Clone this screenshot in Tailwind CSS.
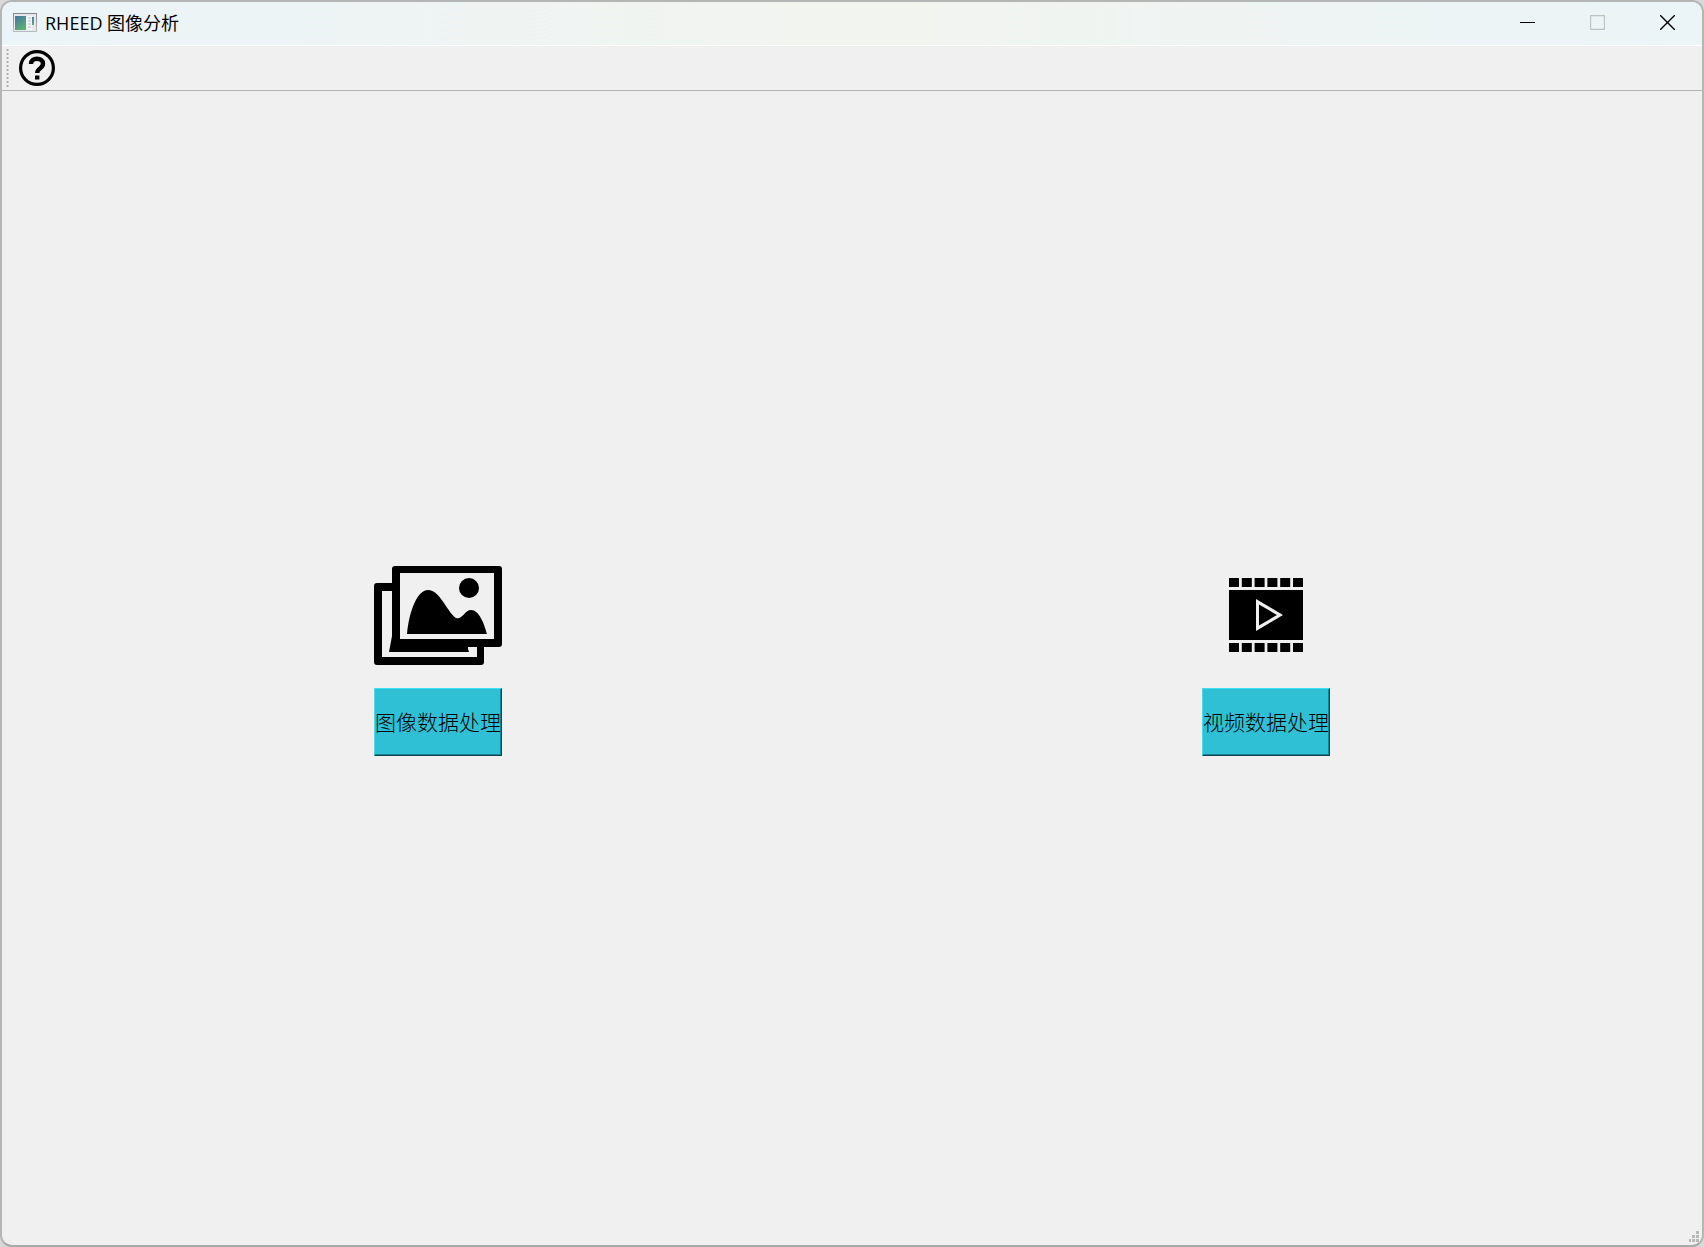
<!DOCTYPE html>
<html lang="zh-CN">
<head>
<meta charset="utf-8">
<title>RHEED 图像分析</title>
<script src="https://cdn.jsdelivr.net/npm/@tailwindcss/browser@4"></script>
</head>
<body class="h-screen overflow-hidden bg-[#d9d9d9]">
<div class="flex h-full flex-col overflow-hidden rounded-xl border-2 border-[#b4b5b5] border-b-[#a9a9a9] bg-[#f0f0f0]">
  <header class="flex h-11 shrink-0 items-center border-b border-white bg-linear-to-r from-[#ebf4f8] via-[#f2f4ef] to-[#ebf4f7] pb-[2px] pl-[11px]">
    <svg class="h-[19px] w-6" viewBox="0 0 24 19" aria-hidden="true">
      <defs>
        <linearGradient id="pane" x1="0" y1="0" x2=".6" y2="1"><stop offset="0" stop-color="#3f78a4"/><stop offset="1" stop-color="#5fb070"/></linearGradient>
        <linearGradient id="frame" x1="0" y1="0" x2="0" y2="1"><stop offset="0" stop-color="#85888d"/><stop offset="1" stop-color="#b9bdc3"/></linearGradient>
      </defs>
      <rect x=".5" y=".5" width="23" height="18" fill="#e6e8ec" stroke="url(#frame)"/>
      <path d="M2 3h12v14H2z" fill="url(#pane)"/>
      <path d="M13 3h6v14h-6z" fill="#f5f6f7"/>
      <path d="M15 5h3M15 8h3M15 11h3M15 14h3" stroke="#bcc0c6"/>
      <path d="M19 4h2v8h-2z" fill="url(#pane)"/>
    </svg>
    <h1 class="ml-2 flex-1 font-['Open_Sans','Noto_Sans_CJK_SC',sans-serif] text-lg font-normal text-black">RHEED 图像分析</h1>
    <div class="flex h-full">
      <button class="flex w-[69px] items-center justify-center" aria-label="最小化"><svg class="size-[15px]" viewBox="0 0 15 15"><path d="M0 7.500h15" stroke="#000"/></svg></button>
      <button class="flex w-[70px] items-center justify-center" aria-label="最大化" disabled><svg class="size-[15px]" viewBox="0 0 15 15"><rect x=".5" y=".5" width="14" height="14" rx="1" fill="none" stroke="#bcc1c3" stroke-width="1.300"/></svg></button>
      <button class="flex w-[70px] items-center justify-center" aria-label="关闭"><svg class="size-[15px]" viewBox="0 0 15 15"><path d="M0 0l15 15M15 0L0 15" stroke="#000" stroke-width="1.400"/></svg></button>
    </div>
  </header>
  <div class="flex h-[45px] shrink-0 items-center border-b border-[#b4b4b4] pl-1" role="toolbar">
    <svg class="h-[38px] w-[3px]" viewBox="0 0 3 38" aria-hidden="true"><path d="M1.500 0v38" stroke="#b0b0b0" stroke-width="2" stroke-dasharray="2 2"/></svg>
    <button class="ml-2 p-[2px]" aria-label="帮助">
      <svg class="size-9" viewBox="0 0 36 36">
        <circle cx="18" cy="18" r="16.400" fill="none" stroke="#000" stroke-width="3.200"/>
        <path d="M12 14c0-3.600 2.600-5.200 6-5.200s6 1.800 6 5c0 4.600-5.800 4.600-5.800 9.200" fill="none" stroke="#000" stroke-width="4.400"/>
        <path d="M16 25.500h4.400v4H16z"/>
      </svg>
    </button>
  </div>
  <main class="flex flex-1 items-center justify-between px-[21.88%]">
    <section class="flex w-32 flex-col items-center gap-2">
      <svg class="size-32" viewBox="0 0 128 128" aria-hidden="true">
        <path fill-rule="evenodd" d="M18 17q0-3 3-3h104q3 0 3 3v75q0 3-3 3h-15v15q0 3-3 3H3q-3 0-3-3V34q0-3 3-3h15zM26 21v66h94V21zM8 39v66h95V95h-9v2l1 3H15l3-16V39z"/>
        <circle cx="95" cy="36" r="10"/>
        <path d="M33 82C35 60 43 38 54 38c12 0 19 22 28 28 6 2 9-8 15-8 8 0 13 13 16 24z"/>
      </svg>
      <button class="flex h-[68px] w-full items-center justify-center border border-t-[#3ce0f4] border-r-[#0d4650] border-b-[#0d4650] border-l-[#3ce0f4] bg-[#30c0d5] font-['Noto_Sans_CJK_SC',sans-serif] text-[21px] font-light whitespace-nowrap text-black shadow-[inset_-1px_-1px_0_#20808e]">图像数据处理</button>
    </section>
    <section class="flex w-32 flex-col items-center gap-2">
      <svg class="size-32" viewBox="0 0 128 128" aria-hidden="true">
        <path d="M27 38h74v50H27z"/>
        <path d="M27 30.500h74M27 95.500h74" stroke="#000" stroke-width="9" stroke-dasharray="10 2.800"/>
        <path fill-rule="evenodd" d="M54 47l27 16-27 16zM57 52.500v21L75 63z" fill="#f0f0f0"/>
      </svg>
      <button class="flex h-[68px] w-full items-center justify-center border border-t-[#3ce0f4] border-r-[#0d4650] border-b-[#0d4650] border-l-[#3ce0f4] bg-[#30c0d5] font-['Noto_Sans_CJK_SC',sans-serif] text-[21px] font-light whitespace-nowrap text-black shadow-[inset_-1px_-1px_0_#20808e]">视频数据处理</button>
    </section>
  </main>
  <footer class="flex h-7 shrink-0 items-end justify-end pr-[3px] pb-[2px]">
    <svg class="size-3" viewBox="0 0 12 12" aria-hidden="true"><path d="M9 0h3v3H9zM5 4h3v3H5zM9 4h3v3H9zM2 8h2v3H2zM5 8h3v3H5zM9 8h3v3H9z" fill="#b8b8b8"/></svg>
  </footer>
</div>
</body>
</html>
